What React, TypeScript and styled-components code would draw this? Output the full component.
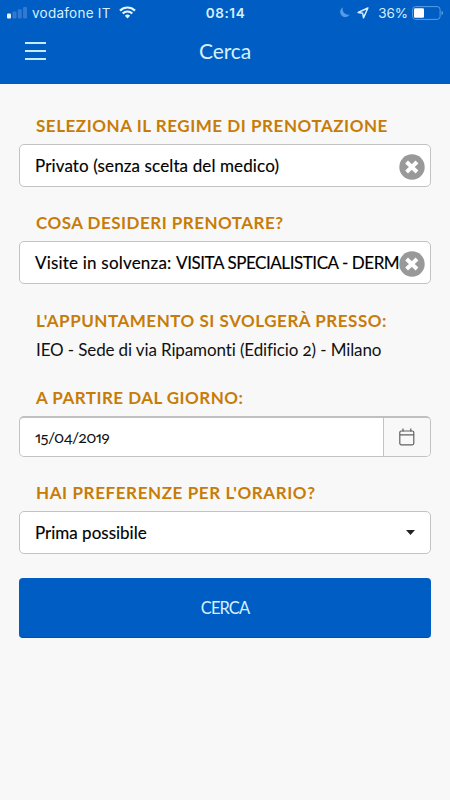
import React from "react";
import styled, { createGlobalStyle } from "styled-components";

const GlobalStyle = createGlobalStyle`
  *, *::before, *::after { box-sizing: border-box; }
  body {
    margin: 0;
    background: #f8f8f8;
    font-family: Lato, "Noto Sans", sans-serif;
    color: #111;
  }
`;

const Screen = styled.div`
  display: flex;
  flex-direction: column;
  width: 450px;
  height: 800px;
  overflow: hidden;
  background: #f8f8f8;
`;

const Header = styled.header`
  height: 84px;
  flex: none;
  background: #005dc3;
  color: #d5f0ff;
`;

const StatusBar = styled.div`
  display: grid;
  grid-template-columns: 1fr auto 1fr;
  align-items: center;
  height: 25px;
  padding: 0 6px 0 7px;
  font-family: Inter, "Liberation Sans", sans-serif;
  font-size: 13.5px;
`;

const StatusGroup = styled.div<{ $end?: boolean }>`
  display: flex;
  align-items: center;
  justify-content: ${(p) => (p.$end ? "flex-end" : "flex-start")};
`;

const Carrier = styled.span`
  margin: 0 8px 0 5px;
  letter-spacing: 0.25px;
`;

const Clock = styled.span`
  font-weight: 600;
  letter-spacing: 0.6px;
`;

const BatteryLevel = styled.span`
  margin: 0 4px 0 9px;
  letter-spacing: -0.1px;
`;

const LocationIcon = styled.svg`
  margin-left: 7px;
`;

const NavBar = styled.nav`
  display: grid;
  grid-template-columns: 21px 1fr 21px;
  align-items: center;
  height: 52px;
  padding: 0 25px;
`;

const MenuButton = styled.button`
  display: flex;
  flex-direction: column;
  gap: 6px;
  padding: 0;
  border: 0;
  background: none;
`;

const MenuLine = styled.span`
  width: 21px;
  height: 2px;
  background: #c8ecff;
`;

const Title = styled.h1`
  margin: 0;
  text-align: center;
  font-size: 21px;
  font-weight: 400;
  line-height: 26px;
  letter-spacing: -0.1px;
`;

const Form = styled.form`
  display: flex;
  flex-direction: column;
  gap: 24px;
  padding: 30px 19px 0;
`;

const Field = styled.div`
  display: flex;
  flex-direction: column;
`;

const Label = styled.label<{ $spacing: number }>`
  height: 24px;
  margin-bottom: 6px;
  padding-left: 17px;
  color: #c77c08;
  font-size: 17px;
  font-weight: 700;
  line-height: 24px;
  letter-spacing: ${(p) => p.$spacing}px;
  white-space: nowrap;
`;

const Box = styled.div`
  display: flex;
  align-items: center;
  height: 43px;
  padding: 0 5px 0 15px;
  border: 1px solid #c3c3c3;
  border-radius: 5px;
  background: #fff;
`;

const Value = styled.span<{ $spacing: number }>`
  flex: 1;
  min-width: 0;
  color: #000;
  font-size: 17px;
  line-height: 24px;
  letter-spacing: ${(p) => p.$spacing}px;
  -webkit-text-stroke: 0.15px #000;
  white-space: nowrap;
`;

const Capitals = styled.span`
  letter-spacing: -0.44px;
`;

const ClearIcon = styled.svg`
  flex: none;
  margin-top: 2px;
`;

const CaretIcon = styled.svg`
  flex: none;
  margin-right: 10px;
`;

const PlaceField = styled(Field)`
  margin-top: 1px;
`;

const Place = styled.p`
  margin: -1px 0 0;
  padding-left: 17px;
  font-size: 17px;
  line-height: 24px;
  letter-spacing: -0.12px;
  font-variant-numeric: oldstyle-nums proportional-nums;
  white-space: nowrap;
`;

const DateBox = styled.div`
  display: flex;
  height: 41px;
  overflow: hidden;
  border: 1px solid #c3c3c3;
  border-top: 2px solid #c0c0c0;
  border-radius: 5px;
  background: #fff;
`;

const DateValue = styled.span`
  flex: 1;
  padding-left: 15px;
  font-size: 16px;
  line-height: 37px;
  letter-spacing: -0.6px;
  font-variant-numeric: oldstyle-nums proportional-nums;
`;

const DateButton = styled.span`
  display: flex;
  align-items: center;
  justify-content: center;
  width: 47px;
  border-left: 1px solid #c3c3c3;
  background: #f8f8f8;
`;

const Submit = styled.button`
  height: 60px;
  border: 0;
  border-bottom: 1px solid #0050ad;
  border-radius: 4px;
  background: #005dc3;
  color: #d5f0ff;
  font-family: inherit;
  font-size: 16.5px;
  letter-spacing: -0.9px;
`;

const Clear = () => (
  <ClearIcon width="26" height="26" viewBox="0 0 26 26">
    <circle cx="13" cy="13" r="12.7" fill="#999" />
    <path d="M7.6 8l10.4 10M18 8L7.6 18" stroke="#fff" strokeWidth="4" />
  </ClearIcon>
);

export default function App() {
  return (
    <Screen>
      <GlobalStyle />
      <Header>
        <StatusBar>
          <StatusGroup>
            <svg width="20" height="12" viewBox="0 0 20 12">
              <rect x="0" y="6.5" width="4" height="5" rx="1" fill="#e8f8ff" />
              <rect x="5.5" y="4.5" width="4" height="7" rx="1" fill="#3279cf" />
              <rect x="10.8" y="2.3" width="4" height="9.2" rx="1" fill="#3279cf" />
              <rect x="16" y="0" width="4" height="11.5" rx="1" fill="#3279cf" />
            </svg>
            <Carrier>vodafone IT</Carrier>
            <svg width="17" height="13" viewBox="0 0 17 13" fill="none" stroke="#e4f6ff" strokeWidth="2.2">
              <path d="M1 4.6a10.6 10.6 0 0 1 15 0" />
              <path d="M3.7 7.5a6.8 6.8 0 0 1 9.6 0" />
              <path d="M8.5 12.5L5.9 9.8a3.7 3.7 0 0 1 5.2 0z" fill="#e4f6ff" stroke="none" />
            </svg>
          </StatusGroup>
          <Clock>08:14</Clock>
          <StatusGroup $end>
            <svg width="11" height="11" viewBox="0 0 11 11">
              <path d="M4 0.3A5.2 5.2 0 1 0 10.8 7.6A5.6 5.6 0 0 1 4 0.3z" fill="#559be2" />
            </svg>
            <LocationIcon width="12" height="12" viewBox="0 0 12 12">
              <path d="M10.9 1L1.1 5.5l4.6.8.8 4.6z" fill="none" stroke="#d5f0ff" strokeWidth="1.4" strokeLinejoin="round" />
            </LocationIcon>
            <BatteryLevel>36%</BatteryLevel>
            <svg width="32" height="14" viewBox="0 0 32 14">
              <rect x="0.6" y="0.6" width="27.5" height="12.8" rx="3" fill="none" stroke="#589de2" />
              <rect x="2" y="2.2" width="10" height="9.6" rx="1.2" fill="#fff" />
              <path d="M29.5 4.8v4.4q1.6-.5 1.6-2.2t-1.6-2.2z" fill="#589de2" />
            </svg>
          </StatusGroup>
        </StatusBar>
        <NavBar>
          <MenuButton type="button" aria-label="Menu">
            <MenuLine />
            <MenuLine />
            <MenuLine />
          </MenuButton>
          <Title>Cerca</Title>
        </NavBar>
      </Header>
      <Form>
        <Field>
          <Label $spacing={0.54}>SELEZIONA IL REGIME DI PRENOTAZIONE</Label>
          <Box>
            <Value $spacing={0.12}>Privato (senza scelta del medico)</Value>
            <Clear />
          </Box>
        </Field>
        <Field>
          <Label $spacing={0.48}>COSA DESIDERI PRENOTARE?</Label>
          <Box>
            <Value $spacing={0.2}>
              Visite in solvenza: <Capitals>VISITA SPECIALISTICA - DERM</Capitals>
            </Value>
            <Clear />
          </Box>
        </Field>
        <PlaceField>
          <Label $spacing={0.52}>L'APPUNTAMENTO SI SVOLGERÀ PRESSO:</Label>
          <Place>IEO - Sede di via Ripamonti (Edificio 2) - Milano</Place>
        </PlaceField>
        <Field>
          <Label $spacing={0.46}>A PARTIRE DAL GIORNO:</Label>
          <DateBox>
            <DateValue>15/04/2019</DateValue>
            <DateButton>
              <svg width="16" height="18" viewBox="0 0 16 18" fill="none" stroke="#606060" strokeWidth="1.2">
                <rect x="0.8" y="3" width="14" height="13.8" rx="1.5" />
                <path d="M1 6.8h13.8M4 0.5v3M11.8 0.5v3" />
              </svg>
            </DateButton>
          </DateBox>
        </Field>
        <Field>
          <Label $spacing={0.6}>HAI PREFERENZE PER L'ORARIO?</Label>
          <Box>
            <Value $spacing={0}>Prima possibile</Value>
            <CaretIcon width="9" height="5" viewBox="0 0 9 5">
              <path d="M0 0h9L4.5 5z" fill="#222" />
            </CaretIcon>
          </Box>
        </Field>
        <Submit type="button">CERCA</Submit>
      </Form>
    </Screen>
  );
}
